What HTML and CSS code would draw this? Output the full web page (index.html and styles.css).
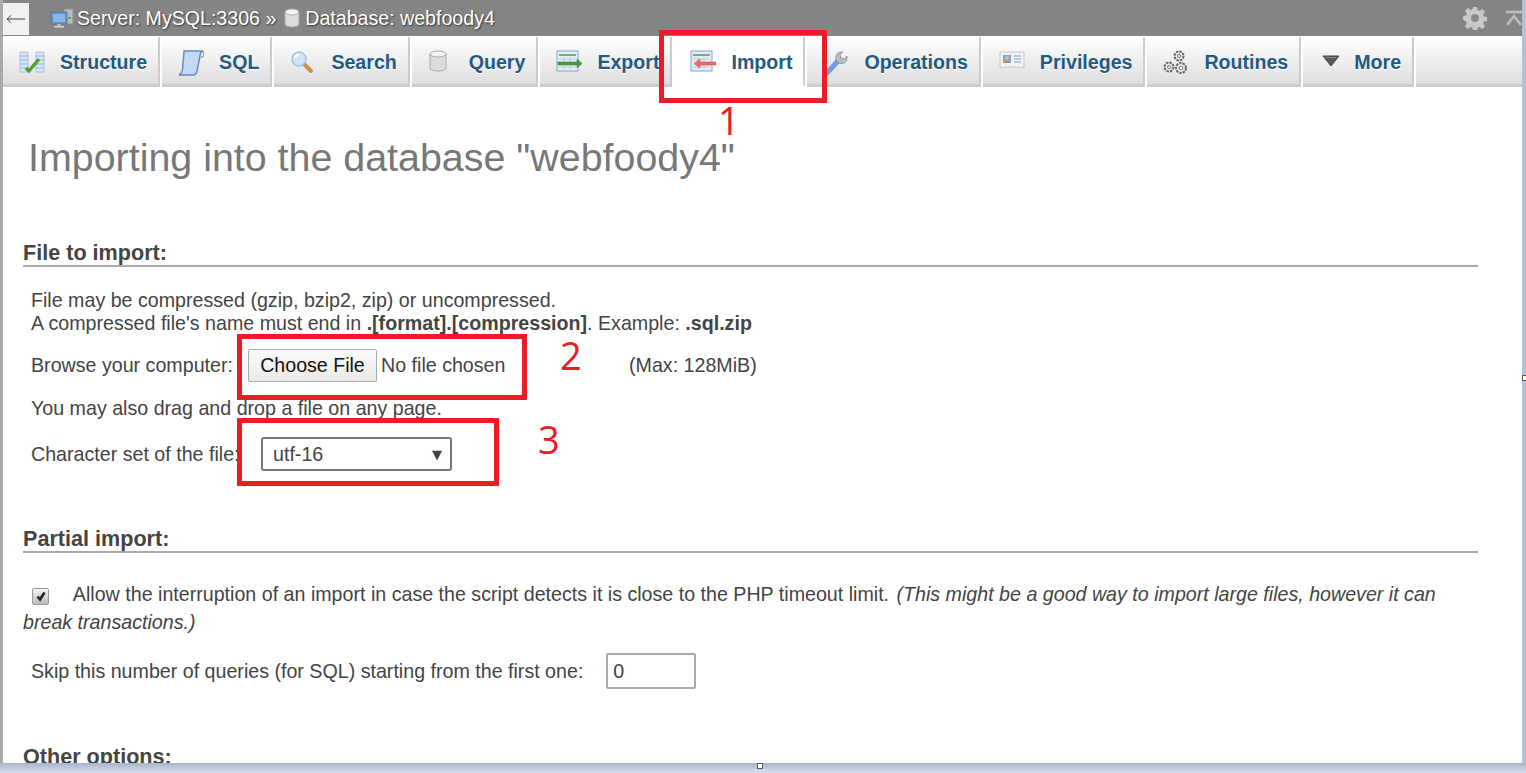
FILE: index.html
```html
<!DOCTYPE html>
<html>

<head>
  <title>Import - webfoody4</title>
  <link rel="stylesheet" href="styles.css">
</head>

<body>
  <div class="window">
    <div class="window-body">
      <div class="page">

        <!-- Top bar -->
        <div class="topbar">
          <button class="back-btn">
            <svg viewBox="0 0 20 10" width="20" height="10">
              <path d="M1 5h18M5 1.500L1 5l4 3.500" fill="none" stroke="#444" stroke-width="1"/>
            </svg>
          </button>
          <svg class="crumb-icon server-icon" viewBox="0 0 24 20" width="24" height="20">
            <rect x="14" y="1" width="9" height="15" fill="#b9bcc0" stroke="#8d9094" stroke-width="1"/>
            <rect x="18" y="9" width="3" height="2" fill="#58a85a"/>
            <rect x="1" y="4" width="16" height="12" fill="#5f93cf" stroke="#6d7782" stroke-width="1"/>
            <rect x="3" y="6" width="12" height="8" fill="#89b8e8"/>
            <rect x="7" y="16" width="4" height="2" fill="#b5b8bc"/>
            <rect x="4" y="18" width="10" height="1.5" fill="#d3d5d8"/>
          </svg>
          <span class="crumb">Server: MySQL:3306 &raquo;</span>
          <svg class="crumb-icon db-icon" viewBox="0 0 18 20" width="18" height="20">
            <path d="M2 4v12c0 2 3 3 7 3s7-1 7-3V4z" fill="#dcdcdc" stroke="#a8a8a8"/>
            <ellipse cx="9" cy="4" rx="7" ry="3" fill="#f4f4f4" stroke="#a8a8a8"/>
          </svg>
          <span class="crumb">Database: webfoody4</span>
          <div class="topbar-right">
            <svg viewBox="0 0 24 24" width="24" height="24">
              <path d="M10 1h4l.6 3.2 1.9.8 2.7-1.9 2.8 2.8-1.9 2.7.8 1.9 3.1.5v4l-3.1.6-.8 1.9 1.9 2.7-2.8 2.8-2.7-1.9-1.9.8-.6 3.1h-4l-.6-3.1-1.9-.8-2.7 1.9-2.8-2.8 1.9-2.7-.8-1.9L0 14v-4l3.1-.5.8-1.9L2 4.9l2.8-2.8 2.7 1.9 1.9-.8z" fill="#c9c9c9"/>
              <circle cx="12" cy="12" r="4" fill="#8a8a8a"/>
            </svg>
            <svg class="collapse-icon" viewBox="0 0 16 16" width="16" height="16">
              <path d="M0 2h16M1 15l7-9 7 9" fill="none" stroke="#bcbcbc" stroke-width="2.500"/>
            </svg>
          </div>
        </div>

        <!-- Tabs -->
        <ul class="tabs">
          <li class="tab">
            <svg class="tab-icon" viewBox="0 0 26 24" width="26" height="24">
              <path d="M1 2h8v20H1zM17 2h8v20h-8z" fill="#d8e6f6" stroke="#a5c4e6"/>
              <path d="M1 6h8M1 10h8M1 14h8M1 18h8M17 6h8M17 10h8M17 14h8M17 18h8" stroke="#8fb5de"/>
              <path d="M7 18l3 3 10-12" fill="none" stroke="#54a033" stroke-width="3.500"/>
            </svg>
            <span>Structure</span>
          </li>
          <li class="tab">
            <svg class="tab-icon" viewBox="0 0 26 26" width="26" height="26">
              <path d="M6 1h19c-2 1-3 3-3 5l-3 15c-.5 2-2 4-4 4H1c2-1 3-3 3.500-5z" fill="#c4d9f2" stroke="#5f8fc8" stroke-width="1.500"/>
              <path d="M22 7h3c1-2 1-4 0-6" fill="#e3eefb" stroke="#5f8fc8"/>
            </svg>
            <span>SQL</span>
          </li>
          <li class="tab">
            <svg class="tab-icon" viewBox="0 0 24 24" width="24" height="24">
              <path d="M14 14l7 7" stroke="#c98d4d" stroke-width="4" stroke-linecap="round"/>
              <circle cx="9" cy="9" r="7" fill="#cfe3f7" stroke="#a4c3df" stroke-width="1.500"/>
              <path d="M5 8a4 4 0 0 1 4-3" fill="none" stroke="#fff" stroke-width="2"/>
            </svg>
            <span>Search</span>
          </li>
          <li class="tab">
            <svg class="tab-icon" viewBox="0 0 20 22" width="20" height="22">
              <path d="M2 4v14c0 2 3 3 8 3s8-1 8-3V4z" fill="#dcdcdc" stroke="#a8a8a8"/>
              <ellipse cx="10" cy="4" rx="8" ry="3" fill="#f3f3f3" stroke="#a8a8a8"/>
            </svg>
            <span>Query</span>
          </li>
          <li class="tab">
            <svg class="tab-icon" viewBox="0 0 26 22" width="26" height="22">
              <rect x="1" y="1" width="21" height="20" fill="#e3edf8" stroke="#7ea6d3"/>
              <path d="M3 5h17" stroke="#6fb36a" stroke-width="2"/>
              <path d="M3 9h17M3 17h17M8 7v12M14 7v12" stroke="#b5cce6"/>
              <path d="M2 12h19V9l5 4.500-5 4.500v-3H2z" fill="#4b9b3c" stroke="#2f7d2a" stroke-width=".5"/>
            </svg>
            <span>Export</span>
          </li>
          <li class="tab tab-active">
            <svg class="tab-icon" viewBox="0 0 26 22" width="26" height="22">
              <rect x="1" y="1" width="21" height="20" fill="#e3edf8" stroke="#7ea6d3"/>
              <path d="M3 5h17" stroke="#6fb36a" stroke-width="2"/>
              <path d="M3 9h17M3 17h17M8 7v12M14 7v12" stroke="#b5cce6"/>
              <path d="M26 12H10V9l-6 4.500 6 4.500v-3h16z" fill="#ef6a6a" stroke="#e03c3c" stroke-width=".5"/>
            </svg>
            <span>Import</span>
          </li>
          <li class="tab">
            <svg class="tab-icon" viewBox="0 0 26 26" width="26" height="26">
              <path d="M2 22l11-12 3 3L5 25c-2 0-3-1-3-3z" fill="#6f9fe0" stroke="#4f7fc4" stroke-width=".8"/>
              <path d="M13 10c-1-4 1-8 5-8l2 0-3 3 1 3 3 1 3-3c1 5-3 9-8 7z" fill="#b9bcc0" stroke="#85888c" stroke-width=".8"/>
            </svg>
            <span>Operations</span>
          </li>
          <li class="tab">
            <svg class="tab-icon" viewBox="0 0 26 20" width="26" height="20">
              <path d="M1 2h24v15l-2 1-2-1H5l-2 1-2-1z" fill="#f2f2f2" stroke="#c6c6c6"/>
              <rect x="4" y="5" width="8" height="8" fill="#6fa8dc"/>
              <circle cx="8" cy="8" r="2.200" fill="#e8b27a"/>
              <path d="M5 13c0-3 6-3 6 0z" fill="#cc8a3c"/>
              <path d="M15 6h7M15 9h7M15 12h7" stroke="#a5bfd8" stroke-width="1.300"/>
            </svg>
            <span>Privileges</span>
          </li>
          <li class="tab">
            <svg class="tab-icon" viewBox="0 0 26 26" width="26" height="26">
              <g fill="#e6e6e6" stroke="#666" stroke-width="2" stroke-dasharray="2.500 1">
                <circle cx="16" cy="6" r="4.500"/>
                <circle cx="6" cy="17" r="4.500"/>
                <circle cx="18" cy="18" r="5"/>
              </g>
              <g fill="#fff" stroke="#777">
                <circle cx="16" cy="6" r="1.500"/>
                <circle cx="6" cy="17" r="1.500"/>
                <circle cx="18" cy="18" r="1.800"/>
              </g>
            </svg>
            <span>Routines</span>
          </li>
          <li class="tab tab-more">
            <svg class="tab-icon" viewBox="0 0 18 12" width="18" height="12">
              <path d="M1 1h16l-8 10z" fill="#5a5a5a" stroke="#444"/>
              <path d="M4 2.500h10" stroke="#8a8a8a"/>
            </svg>
            <span>More</span>
          </li>
          <li class="tab-rest"></li>
        </ul>

        <!-- Import page content -->
        <div class="content">
          <h1>Importing into the database "webfoody4"</h1>

          <div class="section section-file">
            <h2>File to import:</h2>
            <div class="note">
              File may be compressed (gzip, bzip2, zip) or uncompressed.<br>
              A compressed file's name must end in <b>.[format].[compression]</b>. Example: <b>.sql.zip</b>
            </div>
            <div class="row row-browse">
              <span class="row-label">Browse your computer:</span>
              <button class="file-btn">Choose File</button>
              <span class="file-name">No file chosen</span>
              <span class="max-size">(Max: 128MiB)</span>
            </div>
            <div class="row row-drag">You may also drag and drop a file on any page.</div>
            <div class="row row-charset">
              <span class="row-label">Character set of the file:</span>
              <div class="select-box">
                <span>utf-16</span>
                <span class="select-arrow">&#9660;</span>
              </div>
            </div>
          </div>

          <div class="section section-partial">
            <h2>Partial import:</h2>
            <div class="allow">
              <span class="check-box">
                <svg viewBox="0 0 12 12" width="12" height="12">
                  <path d="M2.500 6.500l2.500 3 4.500-7" fill="none" stroke="#222" stroke-width="2.600"/>
                </svg>
              </span>
              Allow the interruption of an import in case the script detects it is close to the PHP timeout limit.
              <i>(This might be a good way to import large files, however it can break transactions.)</i>
            </div>
            <div class="row row-skip">
              <span>Skip this number of queries (for SQL) starting from the first one:</span>
              <div class="skip-input">0</div>
            </div>
          </div>

          <div class="section section-other">
            <h2>Other options:</h2>
          </div>
        </div>
      </div>
      <div class="window-right"></div>
    </div>
    <div class="window-bottom"></div>
  </div>

  <!-- Red markup drawn on the screenshot -->
  <div class="mark mark-1"></div>
  <div class="mark mark-2"></div>
  <div class="mark mark-3"></div>
  <span class="mark-num num-1">1</span>
  <span class="mark-num num-2">2</span>
  <span class="mark-num num-3">3</span>
  <div class="handle handle-right"></div>
  <div class="handle handle-bottom"></div>
</body>

</html>
```

FILE: styles.css
```css
/* Reset some default styles */
body,
h1,
h2,
ul {
  margin: 0;
  padding: 0;
}

body {
  font-family: 'Liberation Sans', Arial, sans-serif;
  font-size: 19.65px;
  color: #444;
  background-color: #fff;
  overflow: hidden;
}

/* Window frame */
.window {
  height: 773px;
  display: flex;
  flex-direction: column;
  overflow: hidden;
}

.window-body {
  flex: 1;
  min-height: 0;
  display: flex;
}

.page {
  flex: 1;
  min-width: 0;
  overflow: hidden;
  border-left: 3px solid #aaa;
}

.window-right {
  width: 4px;
  background-color: #b5c1d7;
}

.window-bottom {
  height: 10px;
  background: linear-gradient(#a8b4c8, #d6e1f0);
}

/* Top bar */
.topbar {
  height: 36px;
  display: flex;
  align-items: center;
  background-color: #858585;
  margin-left: -3px;
  padding-left: 3px;
}

.back-btn {
  width: 26px;
  height: 32px;
  margin-top: 2px;
  padding: 0;
  display: flex;
  align-items: center;
  justify-content: center;
  border: none;
  background-color: #f0f0f0;
}

.crumb-icon {
  flex-shrink: 0;
}

.server-icon {
  margin-left: 21px;
  margin-right: 3px;
}

.db-icon {
  margin-left: 7px;
  margin-right: 4px;
}

.crumb {
  font-size: 19.6px;
  color: #fff;
  text-shadow: 1px 1px 2px #333;
}

.topbar-right {
  margin-left: auto;
  display: flex;
  align-items: center;
  width: 59px;
  gap: 19px;
}

.collapse-icon {
  flex-shrink: 0;
}

/* Tabs */
.tabs {
  list-style: none;
  height: 50px;
  margin-top: 1px;
  display: flex;
  gap: 2px;
}

.tab {
  position: relative;
  height: 44px;
  padding-top: 3px;
  padding-left: 57px;
  padding-right: 11px;
  display: flex;
  align-items: center;
  font-size: 19.6px;
  font-weight: bold;
  color: #235a81;
  text-shadow: 0 1px 0 #fff;
  background: linear-gradient(#fff, #dedede);
  border-bottom: 3px solid #ccc;
  border-right: 2px solid #ccc;
}

.tab-icon {
  position: absolute;
  left: 16px;
  top: 13px;
}

.tab-more {
  padding-left: 51px;
}

.tab-more .tab-icon {
  left: 19px;
  top: 18px;
}

.tab-active {
  background: #fff;
  border-bottom-color: #fff;
}

.tab-rest {
  flex: 1;
  height: 47px;
  background: linear-gradient(#fff, #dedede);
  border-bottom: 3px solid #ccc;
}

/* Main content */
.content {
  padding-top: 47px;
  padding-left: 20px;
}

h1 {
  padding-left: 5px;
  font-size: 39.4px;
  line-height: 46px;
  font-weight: normal;
  color: #777;
}

h2 {
  height: 25px;
  line-height: 26px;
  font-size: 21.6px;
  font-weight: bold;
  border-bottom: 2px solid #aaa;
}

.section {
  width: 1455px;
}

.section-file {
  margin-top: 60px;
}

.section-partial {
  margin-top: 55px;
}

.section-other {
  margin-top: 55px;
}

.note {
  margin-top: 22px;
  padding-left: 8px;
  line-height: 23px;
}

.row {
  padding-left: 8px;
  display: flex;
  align-items: center;
}

.row-browse {
  margin-top: 14px;
  height: 33px;
}

.row-label {
  width: 217px;
  white-space: nowrap;
}

.file-btn {
  width: 129px;
  height: 33px;
  padding: 0;
  font-family: inherit;
  font-size: 19.6px;
  color: #111;
  background: linear-gradient(#fafafa, #eaeaea);
  border: 1px solid #aaa;
  border-radius: 2px;
}

.file-name {
  width: 252px;
  padding-left: 4px;
  box-sizing: border-box;
}

.row-drag {
  margin-top: 14px;
  height: 24px;
}

.row-charset {
  margin-top: 17px;
  height: 34px;
}

.row-charset .row-label {
  width: 230px;
}

.select-box {
  width: 191px;
  height: 34px;
  box-sizing: border-box;
  padding: 0 8px 0 10px;
  display: flex;
  align-items: center;
  justify-content: space-between;
  border: 2px solid #767676;
  border-radius: 3px;
}

.select-arrow {
  font-family: 'DejaVu Sans', sans-serif;
  font-size: 13px;
}

.allow {
  margin-top: 27px;
  line-height: 28px;
}

.allow i {
  margin-left: 2px;
}

.check-box {
  display: inline-flex;
  align-items: center;
  justify-content: center;
  width: 15px;
  height: 15px;
  margin-left: 9px;
  margin-right: 19.5px;
  vertical-align: -1px;
  background: linear-gradient(#f4f4f4, #bbb);
  border: 1px solid #999;
  border-radius: 2px;
}

.row-skip {
  margin-top: 17px;
  height: 36px;
  gap: 23px;
}

.skip-input {
  width: 90px;
  height: 36px;
  box-sizing: border-box;
  padding-left: 5px;
  line-height: 32px;
  border: 2px solid #a9a9a9;
  border-radius: 2px;
}

/* Red markup over the screenshot */
.mark {
  position: absolute;
  box-sizing: border-box;
  border: 5px solid #ed1c24;
}

.mark-1 {
  left: 659px;
  top: 30px;
  width: 168px;
  height: 73px;
}

.mark-2 {
  left: 237px;
  top: 334px;
  width: 290px;
  height: 66px;
}

.mark-3 {
  left: 237px;
  top: 418px;
  width: 262px;
  height: 68px;
}

.mark-num {
  position: absolute;
  font-family: 'Open Sans', sans-serif;
  font-size: 38px;
  line-height: 40px;
  color: #ed1c24;
}

.num-1 {
  left: 718px;
  top: 100px;
}

.num-2 {
  left: 560px;
  top: 335px;
}

.num-3 {
  left: 538px;
  top: 419px;
}

/* Resize handles */
.handle {
  position: absolute;
  width: 4px;
  height: 4px;
  background-color: #fff;
  border: 1px solid #555;
}

.handle-right {
  left: 1522px;
  top: 375px;
}

.handle-bottom {
  left: 757px;
  top: 763px;
}
```
